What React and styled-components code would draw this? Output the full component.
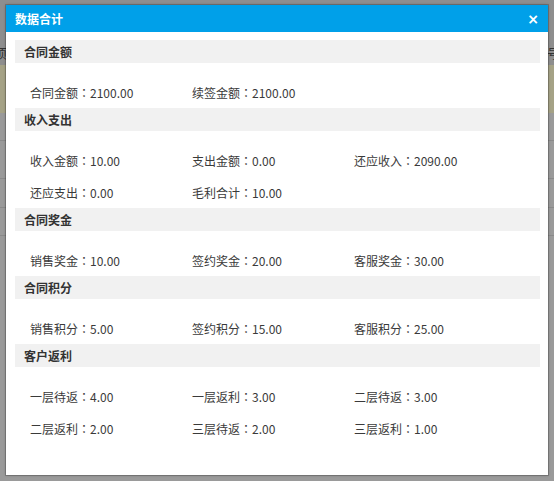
import React from "react";
import styled, { createGlobalStyle } from "styled-components";

const GlobalStyle = createGlobalStyle`
  html, body {
    margin: 0;
    padding: 0;
    width: 100%;
    height: 100%;
    overflow: hidden;
  }
  body {
    font-family: "Noto Sans CJK SC", "Noto Sans", sans-serif;
    background: #999;
  }
`;

const sections = [
  {
    title: "合同金额",
    items: [
      ["合同金额", "2100.00"],
      ["续签金额", "2100.00"],
    ],
  },
  {
    title: "收入支出",
    items: [
      ["收入金额", "10.00"],
      ["支出金额", "0.00"],
      ["还应收入", "2090.00"],
      ["还应支出", "0.00"],
      ["毛利合计", "10.00"],
    ],
  },
  {
    title: "合同奖金",
    items: [
      ["销售奖金", "10.00"],
      ["签约奖金", "20.00"],
      ["客服奖金", "30.00"],
    ],
  },
  {
    title: "合同积分",
    items: [
      ["销售积分", "5.00"],
      ["签约积分", "15.00"],
      ["客服积分", "25.00"],
    ],
  },
  {
    title: "客户返利",
    items: [
      ["一层待返", "4.00"],
      ["一层返利", "3.00"],
      ["二层待返", "3.00"],
      ["二层返利", "2.00"],
      ["三层待返", "2.00"],
      ["三层返利", "1.00"],
    ],
  },
];

export default function App() {
  return (
    <Page>
      <GlobalStyle />
      <BackPage>
        <BackRow $tone="#8e8e8e" $h={65}>
          <BackText>项</BackText>
          <BackText>号</BackText>
        </BackRow>
        <BackRow $tone="#a5a286" $h={48} />
        <BackRow $tone="#9a9a9a" $h={28} $line />
        <BackRow $tone="#9a9a9a" $h={38} $line />
        <BackRow $tone="#9a9a9a" $h={29} $line />
        <BackRow $tone="#9a9a9a" $h={28} $line />
      </BackPage>

      <Dialog>
        <DialogHeader>
          <DialogTitle>数据合计</DialogTitle>
          <CloseButton type="button">×</CloseButton>
        </DialogHeader>
        <DialogBody>
          {sections.map((s) => (
            <Section key={s.title}>
              <SectionBar>{s.title}</SectionBar>
              <ItemGrid>
                {s.items.map(([label, value]) => (
                  <Item key={label}>
                    {label}
                    <Colon>：</Colon>
                    {value}
                  </Item>
                ))}
              </ItemGrid>
            </Section>
          ))}
        </DialogBody>
      </Dialog>
    </Page>
  );
}

const Page = styled.div`
  position: relative;
  width: 554px;
  height: 481px;
  overflow: hidden;
  background: #9a9a9a;
`;

const BackPage = styled.div`
  display: flex;
  flex-direction: column;
`;

const BackRow = styled.div`
  height: ${(p) => p.$h}px;
  background: ${(p) => p.$tone};
  border-bottom: ${(p) => (p.$line ? "1px solid #8a8a8a" : "none")};
  display: flex;
  justify-content: space-between;
  align-items: flex-end;
  padding-bottom: 6px;
  box-sizing: border-box;
`;

const BackText = styled.span`
  font-size: 13px;
  color: #333;
  margin: 0 -6px;
  line-height: 1;
`;

const Dialog = styled.div`
  position: absolute;
  top: 5px;
  left: 6px;
  width: 542px;
  background: #fff;
  box-shadow: 0 0 0 1px rgba(0, 0, 0, 0.18), 0 0 3px rgba(0, 0, 0, 0.25);
`;

const DialogHeader = styled.div`
  height: 27px;
  background: #00a0e9;
  display: flex;
  align-items: center;
  justify-content: space-between;
  padding: 0 9px 0 9px;
`;

const DialogTitle = styled.span`
  color: #fff;
  font-size: 12px;
  font-weight: bold;
`;

const CloseButton = styled.button`
  border: none;
  background: none;
  padding: 0;
  color: #fff;
  font-family: "DejaVu Sans", sans-serif;
  font-size: 14px;
  font-weight: bold;
  line-height: 1;
  cursor: pointer;
`;

const DialogBody = styled.div`
  padding: 8px 8px 31px 9px;
`;

const Section = styled.div`
  display: flex;
  flex-direction: column;
`;

const SectionBar = styled.div`
  height: 23px;
  line-height: 23px;
  background: #f1f1f1;
  padding-left: 9px;
  font-size: 12px;
  font-weight: bold;
  color: #333;
`;

const ItemGrid = styled.div`
  display: grid;
  grid-template-columns: repeat(3, 162px);
  grid-auto-rows: 32px;
  padding: 13px 0 0 15px;
`;

const Item = styled.div`
  display: flex;
  align-items: center;
  font-size: 12px;
  color: #3a3a3a;
  white-space: nowrap;
`;

const Colon = styled.span`
  font-family: "Noto Sans CJK TC", "Noto Sans CJK SC", sans-serif;
`;
